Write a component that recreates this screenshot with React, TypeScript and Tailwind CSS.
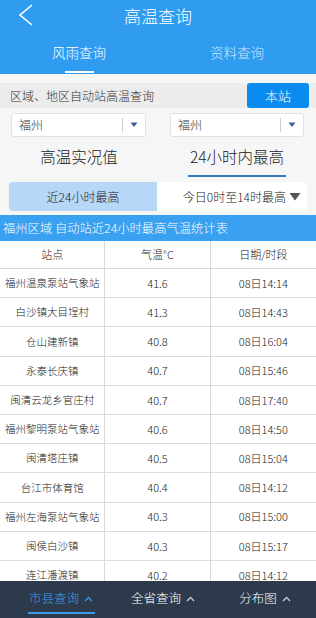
import React from "react";

const rows: [string, string, string][] = [
  ["福州温泉泵站气象站", "41.6", "08日14:14"],
  ["白沙镇大目埕村", "41.3", "08日14:43"],
  ["仓山建新镇", "40.8", "08日16:04"],
  ["永泰长庆镇", "40.7", "08日15:46"],
  ["闽清云龙乡官庄村", "40.7", "08日17:40"],
  ["福州黎明泵站气象站", "40.6", "08日14:50"],
  ["闽清塔庄镇", "40.5", "08日15:04"],
  ["台江市体育馆", "40.4", "08日14:12"],
  ["福州左海泵站气象站", "40.3", "08日15:00"],
  ["闽侯白沙镇", "40.3", "08日15:17"],
  ["连江潘渡镇", "40.2", "08日14:12"],
];

function Select() {
  return (
    <div className="flex items-center h-[24px] bg-white border border-[#e2e2e2] rounded-[3px]">
      <span className="pl-[7px] text-[12px] text-[#333] flex-1">福州</span>
      <span className="w-px h-[14px] bg-[#cfcfcf]" />
      <svg width="22" height="8" viewBox="0 0 22 8">
        <path d="M7.5 1.5 L14.5 1.5 L11 6 Z" fill="#3d5d99" />
      </svg>
    </div>
  );
}

function Caret({ color }: { color: string }) {
  return (
    <svg width="9" height="6" viewBox="0 0 9 6" className="ml-[5px]">
      <path d="M1 5 L4.5 1.5 L8 5" fill="none" stroke={color} strokeWidth="1.3" />
    </svg>
  );
}

export default function App() {
  return (
    <div
      className="w-[316px] h-[618px] flex flex-col overflow-hidden bg-[#f6f6f6] font-light"
      style={{ fontFamily: '"Noto Sans CJK SC","Noto Sans",sans-serif' }}
    >
      <div className="bg-[#2f9cf0] flex-none">
        <div className="relative h-[31px] flex items-center justify-center">
          <svg width="16" height="22" viewBox="0 0 16 22" className="absolute left-[18px] top-[4px]">
            <path d="M14 1 L2 11 L14 21" fill="none" stroke="white" strokeWidth="1.6" />
          </svg>
          <span className="text-[17px] text-white">高温查询</span>
        </div>
        <div className="h-[43px] grid grid-cols-2">
          <div className="flex flex-col items-center justify-end">
            <span className="text-[13.5px] text-white leading-none">风雨查询</span>
            <span className="mt-[12px] mb-[1px] w-[29px] h-[2px] bg-white" />
          </div>
          <div className="flex flex-col items-center justify-end">
            <span className="text-[13.5px] text-[#cfe6fb] leading-none">资料查询</span>
            <span className="mt-[12px] mb-[1px] w-[29px] h-[2px]" />
          </div>
        </div>
      </div>

      <div className="mt-[9px] h-[25px] flex items-center bg-[#ececec]">
        <span className="pl-[10px] text-[12px] text-[#333]">区域、地区自动站高温查询</span>
        <button className="ml-auto mr-[7px] w-[62px] h-[25px] bg-[#0a8bf0] rounded-[3px] text-white text-[13px] font-light">
          本站
        </button>
      </div>

      <div className="mt-[5px] flex">
        <div className="ml-[11px] w-[135px]">
          <Select />
        </div>
        <div className="ml-auto mr-[12px] w-[134px]">
          <Select />
        </div>
      </div>

      <div className="mt-[4px] h-[38px] grid grid-cols-2">
        <div className="flex flex-col items-center justify-start pt-[8px]">
          <span className="text-[15.5px] text-[#222] leading-none">高温实况值</span>
        </div>
        <div className="flex flex-col items-center justify-start pt-[8px]">
          <span className="text-[15.5px] text-[#222] leading-none">24小时内最高</span>
          <span className="mt-[10px] w-[98px] h-[2px] bg-[#3478c0]" />
        </div>
      </div>

      <div className="mx-[9px] mt-[3px] h-[29px] flex bg-white rounded-[4px] overflow-hidden">
        <div className="w-[148px] bg-[#b6d7f7] flex items-center justify-center text-[12px] text-[#222]">
          近24小时最高
        </div>
        <div className="flex-1 flex items-center justify-end pr-[6px] text-[12px] text-[#222]">
          今日0时至14时最高
          <svg width="12" height="9" viewBox="0 0 12 9" className="ml-[3px]">
            <path d="M0.5 1 L11.5 1 L6 8.5 Z" fill="#555" />
          </svg>
        </div>
      </div>

      <div className="mt-[4px] h-[26px] flex items-center bg-[#3aa0f0] pl-[3px] text-[12.3px] text-white flex-none">
        福州区域 自动站近24小时最高气温统计表
      </div>

      <div className="flex-1 overflow-hidden bg-white">
        <div className="grid grid-cols-3 h-[28px] border-b border-[#d9d9d9] text-[11px] text-[#222]">
          <div className="flex items-center justify-center border-r border-[#d9d9d9]">站点</div>
          <div className="flex items-center justify-center border-r border-[#d9d9d9]">气温°C</div>
          <div className="flex items-center justify-center">日期/时段</div>
        </div>
        {rows.map((r, i) => (
          <div
            key={i}
            className="grid grid-cols-3 h-[29.2px] border-b border-[#dcdcdc] text-[10.5px] text-[#222]"
          >
            <div className="flex items-center justify-center border-r border-[#d9d9d9]">{r[0]}</div>
            <div className="flex items-center justify-center border-r border-[#d9d9d9] text-[11px]">{r[1]}</div>
            <div className="flex items-center justify-center text-[11px]">{r[2]}</div>
          </div>
        ))}
      </div>

      <div className="h-[37px] flex-none bg-[#2d3a4b] grid grid-cols-3 pl-[10px]">
        <div className="flex flex-col items-center">
          <div className="flex items-center h-[35px] text-[12.5px] text-[#3a9ae8]">
            市县查询
            <Caret color="#3a9ae8" />
          </div>
          <span className="-mt-[4px] w-[67px] h-[2px] bg-[#3a9ae8]" />
        </div>
        <div className="flex items-center justify-center h-[35px] text-[12.5px] text-white">
          全省查询
          <Caret color="#c9ced6" />
        </div>
        <div className="flex items-center justify-center h-[35px] text-[12.5px] text-white">
          分布图
          <Caret color="#c9ced6" />
        </div>
      </div>
    </div>
  );
}
